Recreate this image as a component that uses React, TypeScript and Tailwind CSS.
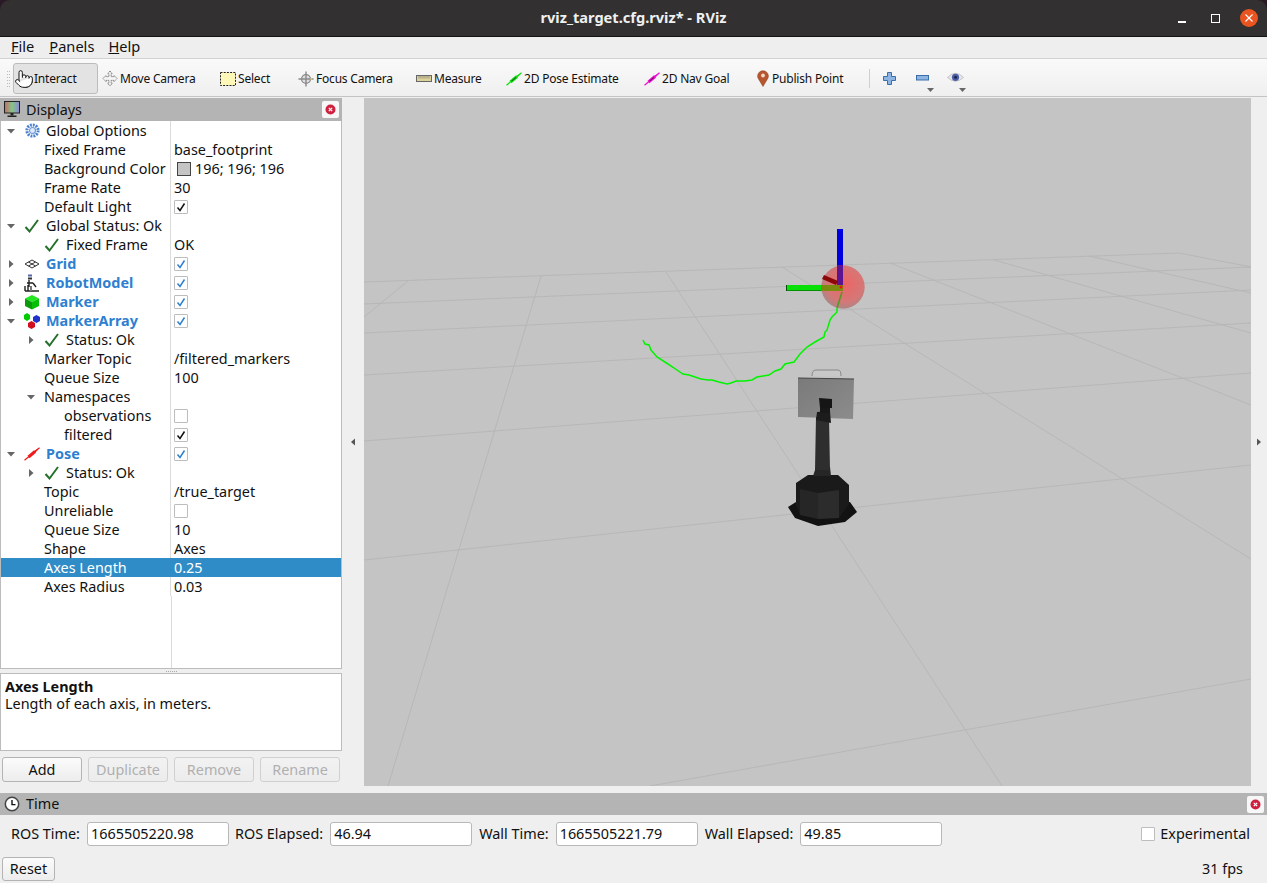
import type { ReactNode } from "react";
import { Pointer } from "lucide-react";

// small icons, all drawn by hand to follow the RViz ones
function Tri({ dir }: { dir: "down" | "right" | "left" }) {
  const pts = dir === "down" ? "1,3 9,3 5,7.5" : dir === "right" ? "3,1 7.5,5 3,9" : "7,1 2.5,5 7,9";
  return (
    <svg width="10" height="10" viewBox="0 0 10 10">
      <polygon points={pts} fill="#666" />
    </svg>
  );
}

function Check() {
  return (
    <svg width="16" height="16" viewBox="0 0 16 16">
      <path d="M1.5 9 L5.5 13.5 L14 2" fill="none" stroke="#25702a" strokeWidth="2" />
    </svg>
  );
}

function Gear() {
  return (
    <svg width="15" height="15" viewBox="0 0 16 16">
      <circle cx="8" cy="8" r="6" fill="none" stroke="#4a80cc" strokeWidth="3.2" strokeDasharray="2 1.1" />
      <circle cx="8" cy="8" r="3.2" fill="#dfe9f8" stroke="#6a98d8" strokeWidth="1.2" />
    </svg>
  );
}

function GridIcon() {
  return (
    <svg width="16" height="12" viewBox="0 0 16 12" fill="none" stroke="#333" strokeWidth="1">
      <path d="M1 6 L8 2 L15 6 L8 10 Z M4.5 4 L11.5 8 M11.5 4 L4.5 8" />
    </svg>
  );
}

function RobotIcon() {
  return (
    <svg width="16" height="18" viewBox="0 0 16 18">
      <rect x="4" y="0.5" width="4" height="2" fill="#5566aa" />
      <rect x="4" y="3.5" width="4" height="2" fill="#333" />
      <path d="M5 6 V13 M3 9 H9 M9 9 L12 13 M1 17 V12 M4 17 V11" stroke="#222" strokeWidth="1.4" fill="none" />
      <path d="M1 17 H15" stroke="#222" strokeWidth="1.5" />
      <rect x="6" y="12" width="2" height="5" fill="#777" />
    </svg>
  );
}

function Cube({ size, top, left, right }: { size: number; top: string; left: string; right: string }) {
  return (
    <svg width={size} height={size} viewBox="0 0 16 16">
      <polygon points="8,1 15,4.5 8,8 1,4.5" fill={top} />
      <polygon points="1,4.5 8,8 8,15.5 1,12" fill={left} />
      <polygon points="15,4.5 8,8 8,15.5 15,12" fill={right} />
    </svg>
  );
}

function MarkerArrayIcon() {
  return (
    <svg width="18" height="18" viewBox="0 0 18 18">
      <polygon points="1,3 4,1 7,3 7,7 4,9 1,7" fill="#0c0" />
      <polygon points="10,5 13.5,3 17,5 17,9 13.5,11 10,9" fill="#2233cc" />
      <polygon points="5,11 8.5,9 12,11 12,15 8.5,17 5,15" fill="#d01020" />
    </svg>
  );
}

function DiagArrow({ color, core }: { color: string; core?: string }) {
  return (
    <svg width="16" height="14" viewBox="0 0 16 14" fill="none">
      <path d="M0.5 13.2 L15.5 0.8" stroke={color} strokeWidth="1.3" />
      <path d="M4.5 10 L11 4.5" stroke={color} strokeWidth="3" />
      <path d="M11 6 L15.5 0.8 L9.5 4.2 Z" fill={color} />
      {core && <path d="M5.5 9.2 L10 5.4" stroke={core} strokeWidth="1.1" />}
    </svg>
  );
}

function CloseBtn() {
  return (
    <span className="flex h-[17px] w-[17px] items-center justify-center rounded-[2px] bg-[#f7f7f7]">
      <svg width="11" height="11" viewBox="0 0 11 11">
        <circle cx="5.5" cy="5.5" r="5" fill="#d0203f" />
        <path d="M3.8 3.8 L7.2 7.2 M7.2 3.8 L3.8 7.2" stroke="#fff" strokeWidth="1.2" />
      </svg>
    </span>
  );
}

function MoveIcon() {
  return (
    <svg width="17" height="17" viewBox="0 0 17 17" fill="#f4f4f4" stroke="#777" strokeWidth="0.9">
      <path d="M8.5 0.5 L11 3.5 H9.7 V6.5 H12.8 V5.2 L16 8.5 L12.8 11.8 V10.5 H9.7 V13.5 H11 L8.5 16.5 L6 13.5 H7.3 V10.5 H4.2 V11.8 L1 8.5 L4.2 5.2 V6.5 H7.3 V3.5 H6 Z" strokeDasharray="1.6 0.5" />
    </svg>
  );
}

function SelectIcon() {
  return (
    <svg width="16" height="14" viewBox="0 0 16 14">
      <rect x="0.5" y="0.5" width="15" height="13" fill="#fdf8b8" stroke="#222" strokeWidth="1" strokeDasharray="2 1.2" />
    </svg>
  );
}

function FocusIcon() {
  return (
    <svg width="18" height="18" viewBox="0 0 18 18" fill="none">
      <circle cx="9" cy="9" r="5" fill="#e0e0e0" stroke="#888" strokeWidth="1.4" />
      <path d="M9 0.5 V17.5 M0.5 9 H17.5" stroke="#8a8a8a" strokeWidth="1.6" />
      <path d="M13.8 9 H16" stroke="#e8dc80" strokeWidth="1.4" />
    </svg>
  );
}

function RulerIcon() {
  return (
    <svg width="16" height="7" viewBox="0 0 16 7">
      <rect x="0.5" y="0.5" width="15" height="6" fill="#ddd29a" stroke="#666" />
      <path d="M3 1 V3.5 M5 1 V3.5 M7 1 V3.5 M9 1 V3.5 M11 1 V3.5 M13 1 V3.5" stroke="#777" strokeWidth="0.7" />
    </svg>
  );
}

function PinIcon() {
  return (
    <svg width="12" height="17" viewBox="0 0 12 17">
      <path d="M6 16.5 L1.8 9.5 A5.4 5.4 0 1 1 10.2 9.5 Z" fill="#b5562e" stroke="#8a4020" strokeWidth="0.5" />
      <circle cx="6" cy="5.5" r="1.9" fill="#f3d8c8" />
    </svg>
  );
}

function DisplaysIcon() {
  return (
    <svg width="16" height="17" viewBox="0 0 16 17">
      <defs>
        <linearGradient id="screen" x1="0" x2="1" y1="0" y2="0">
          <stop offset="0" stopColor="#c46a6a" />
          <stop offset="0.5" stopColor="#86c486" />
          <stop offset="1" stopColor="#8a8ad8" />
        </linearGradient>
      </defs>
      <rect x="0.5" y="0.5" width="15" height="11.5" fill="url(#screen)" stroke="#222" />
      <rect x="6.5" y="12" width="3" height="2.5" fill="#222" />
      <rect x="3.5" y="14.5" width="9" height="1.5" fill="#222" />
    </svg>
  );
}

function ClockIcon() {
  return (
    <svg width="16" height="16" viewBox="0 0 16 16">
      <circle cx="8" cy="8" r="6.7" fill="#fff" stroke="#444" strokeWidth="1.5" />
      <path d="M8 4 V8.6 H11.5" fill="none" stroke="#111" strokeWidth="1.4" />
    </svg>
  );
}

function CheckBox({ state }: { state: "off" | "black" | "blue" }) {
  return (
    <span className="flex h-[14px] w-[14px] items-center justify-center rounded-[1px] border border-[#bdbdbd] bg-white">
      {state !== "off" && (
        <svg width="10" height="10" viewBox="0 0 10 10">
          <path d="M1.5 5.5 L4 8.5 L8.5 1.5" fill="none" stroke={state === "blue" ? "#2f7fd1" : "#111"} strokeWidth="1.5" />
        </svg>
      )}
    </span>
  );
}

type Row = {
  label: string;
  value?: string;
  swatch?: boolean;
  box?: "off" | "black" | "blue";
  arrow?: "down" | "right";
  icon?: ReactNode;
  nested?: boolean;
  bold?: boolean;
  selected?: boolean;
  pad?: string;
};

const okIcon = <Check />;

const rows: Row[] = [
  { label: "Global Options", arrow: "down", icon: <Gear /> },
  { label: "Fixed Frame", value: "base_footprint" },
  { label: "Background Color", value: "196; 196; 196", swatch: true },
  { label: "Frame Rate", value: "30" },
  { label: "Default Light", box: "black" },
  { label: "Global Status: Ok", arrow: "down", icon: okIcon },
  { label: "Fixed Frame", value: "OK", nested: true, icon: okIcon },
  { label: "Grid", arrow: "right", icon: <GridIcon />, bold: true, box: "blue" },
  { label: "RobotModel", arrow: "right", icon: <RobotIcon />, bold: true, box: "blue" },
  { label: "Marker", arrow: "right", icon: <Cube size={16} top="#22e622" left="#0a9a0a" right="#07bf07" />, bold: true, box: "blue" },
  { label: "MarkerArray", arrow: "down", icon: <MarkerArrayIcon />, bold: true, box: "blue" },
  { label: "Status: Ok", arrow: "right", nested: true, icon: okIcon },
  { label: "Marker Topic", value: "/filtered_markers" },
  { label: "Queue Size", value: "100" },
  { label: "Namespaces", arrow: "down", nested: true },
  { label: "observations", box: "off", pad: "pl-[63px]" },
  { label: "filtered", box: "black", pad: "pl-[63px]" },
  { label: "Pose", arrow: "down", icon: <DiagArrow color="#ee1c1c" />, bold: true, box: "blue" },
  { label: "Status: Ok", arrow: "right", nested: true, icon: okIcon },
  { label: "Topic", value: "/true_target" },
  { label: "Unreliable", box: "off" },
  { label: "Queue Size", value: "10" },
  { label: "Shape", value: "Axes" },
  { label: "Axes Length", value: "0.25", selected: true },
  { label: "Axes Radius", value: "0.03" },
];

function TreeRow({ row }: { row: Row }) {
  return (
    <div className={`flex h-[19px] leading-[19px] ${row.selected ? "bg-[#308cc6] text-white" : ""}`}>
      <div className={`flex w-[170px] shrink-0 items-center border-r ${row.selected ? "border-[#308cc6]" : "border-[#dcdcdc]"}`}>
        {row.arrow || row.icon ? (
          <div className={`flex items-center ${row.nested ? "pl-[24px]" : "pl-[4px]"}`}>
            <span className="flex w-[12px] justify-center">{row.arrow && <Tri dir={row.arrow} />}</span>
            {row.icon && <span className="ml-[6px] flex w-[18px] shrink-0 justify-center">{row.icon}</span>}
            <span className={`whitespace-nowrap ${row.icon ? "ml-[5px]" : "ml-[7px]"} ${row.bold ? "font-bold text-[#2f7fd1]" : ""}`}>
              {row.label}
            </span>
          </div>
        ) : (
          <span className={`whitespace-nowrap ${row.pad ?? "pl-[43px]"}`}>{row.label}</span>
        )}
      </div>
      <div className="flex min-w-0 flex-1 items-center pl-[3px]">
        {row.box && <CheckBox state={row.box} />}
        {row.swatch && <span className="mr-[4px] ml-[3px] h-[14px] w-[14px] border border-[#444] bg-[#c4c4c4]" />}
        {row.value && <span className="whitespace-nowrap">{row.value}</span>}
      </div>
    </div>
  );
}

const tools = [
  { name: "Move Camera", icon: <MoveIcon />, width: "w-[118px]", slot: "w-[16px]" },
  { name: "Select", icon: <SelectIcon />, width: "w-[78px]", slot: "w-[16px]" },
  { name: "Focus Camera", icon: <FocusIcon />, width: "w-[118px]", slot: "w-[16px]" },
  { name: "Measure", icon: <RulerIcon />, width: "w-[90px]", slot: "w-[16px]" },
  { name: "2D Pose Estimate", icon: <DiagArrow color="#12e012" core="#0a6a0a" />, width: "w-[138px]", slot: "w-[16px]" },
  { name: "2D Nav Goal", icon: <DiagArrow color="#ee12d0" core="#7a0a70" />, width: "w-[112px]", slot: "w-[16px]" },
  { name: "Publish Point", icon: <PinIcon />, width: "w-[108px]", slot: "w-[14px]" },
];

function Toolbar() {
  return (
    <div className="flex h-[38px] items-center border-b border-[#c4c4c4] bg-gradient-to-b from-[#fafafa] to-[#efefef] pt-[2px] pl-[7px] text-[12px] tracking-[-0.2px]">
      <div className="mr-[3px] grid grid-cols-2 gap-x-[1px] gap-y-[2px]">
        {Array.from({ length: 12 }).map((_, i) => (
          <span key={i} className="h-[1px] w-[1px] bg-[#bbb]" />
        ))}
      </div>
      <div className="flex h-[31px] w-[85px] items-center rounded-[3px] border border-[#bcbcbc] bg-[#e3e3e3]">
        <Pointer size={20} strokeWidth={1.2} color="#111" fill="#fff" />
        <span className="pt-[1px]">Interact</span>
      </div>
      {tools.map((t) => (
        <div key={t.name} className={`flex items-center whitespace-nowrap pl-[4px] ${t.width}`}>
          <span className={`flex shrink-0 justify-center ${t.slot}`}>{t.icon}</span>
          <span className="ml-[2px] pt-[1px]">{t.name}</span>
        </div>
      ))}
      <span className="ml-[9px] h-[19px] w-[1px] bg-[#cfcfcf]" />
      <svg className="ml-[13px]" width="13" height="13" viewBox="0 0 13 13">
        <path d="M4.5 0.5 H8.5 V4.5 H12.5 V8.5 H8.5 V12.5 H4.5 V8.5 H0.5 V4.5 H4.5 Z" fill="#8db4e2" stroke="#3a6ea8" />
      </svg>
      <div className="relative ml-[20px] h-[20px] w-[12px]">
        <svg className="mt-[6px]" width="13" height="6" viewBox="0 0 13 6">
          <rect x="0.5" y="0.5" width="12" height="4.5" fill="#8db4e2" stroke="#3a6ea8" />
        </svg>
        <svg className="absolute -right-[6px] bottom-[-4px]" width="7" height="5" viewBox="0 0 7 5">
          <polygon points="0,0 7,0 3.5,4" fill="#666" />
        </svg>
      </div>
      <div className="relative ml-[19px] h-[20px] w-[17px]">
        <svg className="mt-[3px]" width="17" height="11" viewBox="0 0 17 11">
          <path d="M0.5 5.5 Q8.5 -3 16.5 5.5 Q8.5 13 0.5 5.5 Z" fill="#e6e6ec" stroke="#aaa" strokeWidth="0.6" />
          <circle cx="8.5" cy="5.3" r="3.6" fill="#4a5ea8" />
          <circle cx="8.5" cy="5.3" r="1.5" fill="#1c2450" />
        </svg>
        <svg className="absolute -right-[2px] bottom-[-4px]" width="7" height="5" viewBox="0 0 7 5">
          <polygon points="0,0 7,0 3.5,4" fill="#666" />
        </svg>
      </div>
    </div>
  );
}

function PanelButton({ label, disabled, width }: { label: string; disabled?: boolean; width: string }) {
  return (
    <div
      className={`flex h-[25px] items-center justify-center rounded-[3px] border bg-gradient-to-b ${width} ${
        disabled
          ? "border-[#d0d0d0] from-[#f2f2f2] to-[#ececec] text-[#b0b0b0]"
          : "border-[#b4b4b4] from-[#fbfbfb] to-[#ededed] text-[#111]"
      }`}
    >
      {label}
    </div>
  );
}

function DisplaysPanel() {
  return (
    <div className="flex w-[342px] shrink-0 flex-col pt-[1px]">
      <div className="flex h-[23px] items-center bg-[#b4b4b4] pr-[3px] pl-[4px]">
        <DisplaysIcon />
        <span className="ml-[6px] flex-1 pt-[1px]">Displays</span>
        <CloseBtn />
      </div>
      <div className="h-[548px] border-x border-b border-[#bcbcbc] bg-white">
        {rows.map((r, i) => (
          <TreeRow key={i} row={r} />
        ))}
        <div className="ml-[170px] h-[72px] w-[1px] bg-[#dcdcdc]" />
      </div>
      <div className="flex h-[4px] items-center justify-center gap-[1px]">
        {[0, 1, 2, 3, 4, 5].map((d) => (
          <span key={d} className="h-[1px] w-[1px] bg-[#aaa]" />
        ))}
      </div>
      <div className="h-[78px] border border-[#bcbcbc] bg-white pl-[4px] leading-[17px]">
        <div className="pt-[4px] font-bold">Axes Length</div>
        <div>Length of each axis, in meters.</div>
      </div>
      <div className="mt-[6px] flex gap-[6px] pl-[2px]">
        <PanelButton label="Add" width="w-[80px]" />
        <PanelButton label="Duplicate" disabled width="w-[80px]" />
        <PanelButton label="Remove" disabled width="w-[80px]" />
        <PanelButton label="Rename" disabled width="w-[80px]" />
      </div>
    </div>
  );
}

// floor grid lines of the 3D view, in page coordinates
const gridLines = [
  "364,282 1179,253",
  "364,304 1251,267",
  "364,333 1251,290",
  "364,375 1251,323",
  "364,441 1251,373",
  "364,560 1251,465",
  "650,786 1251,679",
  "408,281 364,317",
  "541,276 388,786",
  "666,272 1002,786",
  "782,267 1251,559",
  "890,263 1251,405",
  "994,260 1251,333",
  "1089,256 1251,293",
  "1179,253 1251,267",
];

function Scene() {
  return (
    <svg className="block h-full w-full" viewBox="364 98 887 688">
      <defs>
        <radialGradient id="ball" cx="0.55" cy="0.42" r="0.6">
          <stop offset="0" stopColor="#f25a5a" stopOpacity="0.9" />
          <stop offset="0.7" stopColor="#d86a6a" stopOpacity="0.85" />
          <stop offset="1" stopColor="#a88080" stopOpacity="0.9" />
        </radialGradient>
        <linearGradient id="board" x1="0" x2="1" y1="0" y2="1">
          <stop offset="0" stopColor="#7a7a7a" />
          <stop offset="1" stopColor="#8c8c8c" />
        </linearGradient>
      </defs>
      {gridLines.map((pts) => (
        <polyline key={pts} points={pts} fill="none" stroke="#b6b6b6" strokeWidth="0.9" />
      ))}

      <polyline
        points="643,340 645,344 649,345 651,350 657,357 668,364 677,370 683,374 689,375 695,377 701,379 708,380 712,380 719,382 727,384 731,383 736,381 745,381 752,380 757,377 763,376 769,375 775,371 781,369 785,364 794,362 800,354 807,347 815,342 824,337 825,332 827,330 830,320 832,317 837,312 837,308"
        fill="none"
        stroke="#00f400"
        strokeWidth="1.5"
      />

      <polygon points="786,285 843,285 843,291 786,291" fill="#06e006" />
      <polygon points="786,285 787,285 787,291 786,291" fill="#0a4a0a" />
      <rect x="787" y="290" width="34" height="1" fill="#049004" />
      <circle cx="843" cy="287" r="21.7" fill="url(#ball)" />
      <rect x="837" y="229" width="6" height="36" fill="#0000e0" />
      <rect x="837" y="265" width="6" height="21" fill="#5c1490" />
      <polygon points="821,285 843,285 843,291 821,291" fill="#7c8a10" />
      <polygon points="824,275 838,281 836,285 822,279" fill="#8a0808" />
      <circle cx="841" cy="287" r="1.5" fill="#ff1010" />
      <polyline points="842,292 837,308" fill="none" stroke="#4f9a20" strokeWidth="1.5" />

      <path d="M812,376 Q812,370 816,370 H838 Q841,370 841,376" fill="#c8c8c8" stroke="#777" strokeWidth="0.8" />
      <polygon points="798,378 854,379 853,419 798,417" fill="url(#board)" />
      <polyline points="798,378 854,379" stroke="#444" strokeWidth="1" fill="none" />

      <polygon points="788,507 796,502 850,502 857,512 845,522 818,526 795,518" fill="#121212" />
      <polygon points="796,483 808,475 838,475 849,485 849,504 839,518 800,515 796,505" fill="#1a1a1a" />
      <polygon points="800,489 818,493 818,519 800,515" fill="#262626" />
      <polygon points="818,493 839,490 839,518 818,519" fill="#2c2c2c" />
      <polygon points="813,476 816,467 830,467 831,476" fill="#262626" />
      <polygon points="816,417 829,417 830,470 815,470" fill="#2e2e2e" />
      <polygon points="817,412 830,411 831,423 816,420" fill="#1c1c1c" />
      <polygon points="820,406 830,406 830,413 820,413" fill="#181818" />
      <polygon points="819,398 832,399 832,408 820,408" fill="#151515" />
    </svg>
  );
}

function TimeField({ label, value, gap }: { label: string; value: string; gap: string }) {
  return (
    <div className={`flex items-center ${gap}`}>
      <span className="mr-[7px] whitespace-nowrap">{label}</span>
      <div className="flex h-[24px] w-[142px] items-center rounded-[3px] border border-[#b8b8b8] bg-white pl-[3px]">{value}</div>
    </div>
  );
}

function TimePanel() {
  return (
    <div className="flex h-[90px] flex-col">
      <div className="flex h-[22px] items-center bg-[#b4b4b4] pr-[3px] pl-[4px]">
        <ClockIcon />
        <span className="ml-[6px] flex-1">Time</span>
        <CloseBtn />
      </div>
      <div className="mt-[7px] flex h-[24px] items-center pl-[11px]">
        <TimeField label="ROS Time:" value="1665505220.98" gap="" />
        <TimeField label="ROS Elapsed:" value="46.94" gap="ml-[6px]" />
        <TimeField label="Wall Time:" value="1665505221.79" gap="ml-[7px]" />
        <TimeField label="Wall Elapsed:" value="49.85" gap="ml-[7px]" />
        <div className="ml-auto flex items-center pr-[17px]">
          <CheckBox state="off" />
          <span className="ml-[5px]">Experimental</span>
        </div>
      </div>
      <div className="mt-[11px] flex items-center justify-between pr-[24px] pl-[2px]">
        <div className="flex h-[24px] w-[53px] items-center justify-center rounded-[3px] border border-[#b4b4b4] bg-gradient-to-b from-[#fbfbfb] to-[#ededed]">
          Reset
        </div>
        <span>31 fps</span>
      </div>
    </div>
  );
}

export default function App() {
  return (
    <div className="flex h-[883px] w-[1267px] flex-col overflow-hidden bg-[#2a1a26] font-['Noto_Sans',sans-serif] text-[14.4px] text-[#111]">
      <div className="grid h-[37px] shrink-0 grid-cols-[1fr_auto_1fr] items-center rounded-t-[10px] border-b border-[#141414] bg-[#323030] text-white">
        <span />
        <div className="text-[14.6px] font-bold text-[#f0f0f0]">rviz_target.cfg.rviz* - RViz</div>
        <div className="flex items-center justify-end pr-[9px]">
          <span className="mt-[7px] h-[2px] w-[8px] bg-white" />
          <span className="ml-[25px] h-[9px] w-[9px] border border-white" />
          <span className="ml-[20px] flex h-[18px] w-[18px] items-center justify-center rounded-full bg-[#e95420]">
            <svg width="8" height="8" viewBox="0 0 8 8">
              <path d="M0.5 0.5 L7.5 7.5 M7.5 0.5 L0.5 7.5" stroke="#fff" strokeWidth="1.2" />
            </svg>
          </span>
        </div>
      </div>

      <div className="flex h-[22px] shrink-0 items-center border-b border-[#d2d2d2] bg-[#eeeeee] pb-[1px] pl-[11px] text-[14.6px]">
        <span><u>F</u>ile</span>
        <span className="ml-[15px]"><u>P</u>anels</span>
        <span className="ml-[14px]"><u>H</u>elp</span>
      </div>

      <Toolbar />

      <div className="flex h-[696px] shrink-0 bg-[#efefef]">
        <DisplaysPanel />
        <div className="flex w-[22px] shrink-0 items-center justify-start pl-[8px] pb-[7px]">
          <svg width="6" height="8" viewBox="0 0 6 8"><polygon points="5,0.5 1,4 5,7.5" fill="#555" /></svg>
        </div>
        <div className="mt-[1px] h-[688px] w-[887px] shrink-0 bg-[#c4c4c4]">
          <Scene />
        </div>
        <div className="flex flex-1 items-center justify-end pr-[5px] pb-[7px]">
          <svg width="6" height="8" viewBox="0 0 6 8"><polygon points="1,0.5 5,4 1,7.5" fill="#555" /></svg>
        </div>
      </div>

      <div className="shrink-0 bg-[#efefef]">
        <TimePanel />
      </div>
    </div>
  );
}
